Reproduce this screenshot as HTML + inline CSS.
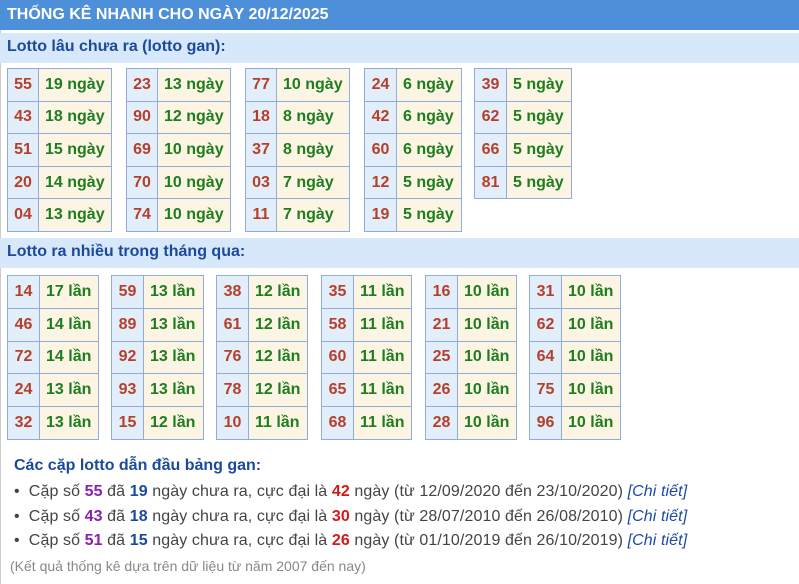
<!DOCTYPE html><html><head><meta charset="utf-8"><style>
body{margin:0;width:799px;height:584px;background:#fff;font-family:"Liberation Sans",Arial,sans-serif;position:relative;overflow:hidden}
.hd{position:absolute;left:0;top:0;width:799px;height:30px;background:#4d8fd8;color:#fff;font-weight:bold;font-size:16px;line-height:30px;padding-left:7px;box-sizing:border-box}
.sb{position:absolute;left:0;width:799px;height:30px;background:#d7e8fb;color:#1b4a9c;font-weight:bold;font-size:16px;line-height:28px;padding-left:7px;box-sizing:border-box}
table{position:absolute;border-collapse:collapse}
td{border:1px solid #90acd9;padding:0;font-weight:bold;font-size:16px}
td.n{background:#e3eefb;color:#b5402a;text-align:center}
td.d{background:#fdf5e4;color:#1e7d1e;padding-left:6px}
.lb{position:absolute;left:0;top:0;width:1px;height:584px;background:#ccc}
.b{position:absolute;left:14px;font-size:16px;color:#444;white-space:nowrap;letter-spacing:0.1px}
.b .p{color:#8a1fb0;font-weight:bold}.b .q{color:#1b4a9c;font-weight:bold}.b .r{color:#d31a1a;font-weight:bold}.b i{color:#1b4aa8}
</style></head><body>
<div class="lb"></div>
<div class="hd">THỐNG KÊ NHANH CHO NGÀY 20/12/2025</div>
<div class="sb" style="top:33px">Lotto lâu chưa ra (lotto gan):</div>
<table style="left:7px;top:68px;width:105px"><colgroup><col style="width:31px"><col></colgroup>
<tr style="height:32.6px"><td class="n">55</td><td class="d">19 ngày</td></tr><tr style="height:32.6px"><td class="n">43</td><td class="d">18 ngày</td></tr><tr style="height:32.6px"><td class="n">51</td><td class="d">15 ngày</td></tr><tr style="height:32.6px"><td class="n">20</td><td class="d">14 ngày</td></tr><tr style="height:32.6px"><td class="n">04</td><td class="d">13 ngày</td></tr></table>
<table style="left:126px;top:68px;width:105px"><colgroup><col style="width:31px"><col></colgroup>
<tr style="height:32.6px"><td class="n">23</td><td class="d">13 ngày</td></tr><tr style="height:32.6px"><td class="n">90</td><td class="d">12 ngày</td></tr><tr style="height:32.6px"><td class="n">69</td><td class="d">10 ngày</td></tr><tr style="height:32.6px"><td class="n">70</td><td class="d">10 ngày</td></tr><tr style="height:32.6px"><td class="n">74</td><td class="d">10 ngày</td></tr></table>
<table style="left:245px;top:68px;width:105px"><colgroup><col style="width:31px"><col></colgroup>
<tr style="height:32.6px"><td class="n">77</td><td class="d">10 ngày</td></tr><tr style="height:32.6px"><td class="n">18</td><td class="d">8 ngày</td></tr><tr style="height:32.6px"><td class="n">37</td><td class="d">8 ngày</td></tr><tr style="height:32.6px"><td class="n">03</td><td class="d">7 ngày</td></tr><tr style="height:32.6px"><td class="n">11</td><td class="d">7 ngày</td></tr></table>
<table style="left:364px;top:68px;width:98px"><colgroup><col style="width:32px"><col></colgroup>
<tr style="height:32.6px"><td class="n">24</td><td class="d">6 ngày</td></tr><tr style="height:32.6px"><td class="n">42</td><td class="d">6 ngày</td></tr><tr style="height:32.6px"><td class="n">60</td><td class="d">6 ngày</td></tr><tr style="height:32.6px"><td class="n">12</td><td class="d">5 ngày</td></tr><tr style="height:32.6px"><td class="n">19</td><td class="d">5 ngày</td></tr></table>
<table style="left:474px;top:68px;width:98px"><colgroup><col style="width:32px"><col></colgroup>
<tr style="height:32.6px"><td class="n">39</td><td class="d">5 ngày</td></tr><tr style="height:32.6px"><td class="n">62</td><td class="d">5 ngày</td></tr><tr style="height:32.6px"><td class="n">66</td><td class="d">5 ngày</td></tr><tr style="height:32.6px"><td class="n">81</td><td class="d">5 ngày</td></tr></table>
<div class="sb" style="top:238px">Lotto ra nhiều trong tháng qua:</div>
<table style="left:7px;top:275px;width:92px"><colgroup><col style="width:32px"><col></colgroup>
<tr style="height:32.8px"><td class="n">14</td><td class="d">17 lần</td></tr><tr style="height:32.8px"><td class="n">46</td><td class="d">14 lần</td></tr><tr style="height:32.8px"><td class="n">72</td><td class="d">14 lần</td></tr><tr style="height:32.8px"><td class="n">24</td><td class="d">13 lần</td></tr><tr style="height:32.8px"><td class="n">32</td><td class="d">13 lần</td></tr></table>
<table style="left:111px;top:275px;width:93px"><colgroup><col style="width:32px"><col></colgroup>
<tr style="height:32.8px"><td class="n">59</td><td class="d">13 lần</td></tr><tr style="height:32.8px"><td class="n">89</td><td class="d">13 lần</td></tr><tr style="height:32.8px"><td class="n">92</td><td class="d">13 lần</td></tr><tr style="height:32.8px"><td class="n">93</td><td class="d">13 lần</td></tr><tr style="height:32.8px"><td class="n">15</td><td class="d">12 lần</td></tr></table>
<table style="left:216px;top:275px;width:92px"><colgroup><col style="width:32px"><col></colgroup>
<tr style="height:32.8px"><td class="n">38</td><td class="d">12 lần</td></tr><tr style="height:32.8px"><td class="n">61</td><td class="d">12 lần</td></tr><tr style="height:32.8px"><td class="n">76</td><td class="d">12 lần</td></tr><tr style="height:32.8px"><td class="n">78</td><td class="d">12 lần</td></tr><tr style="height:32.8px"><td class="n">10</td><td class="d">11 lần</td></tr></table>
<table style="left:321px;top:275px;width:91px"><colgroup><col style="width:32px"><col></colgroup>
<tr style="height:32.8px"><td class="n">35</td><td class="d">11 lần</td></tr><tr style="height:32.8px"><td class="n">58</td><td class="d">11 lần</td></tr><tr style="height:32.8px"><td class="n">60</td><td class="d">11 lần</td></tr><tr style="height:32.8px"><td class="n">65</td><td class="d">11 lần</td></tr><tr style="height:32.8px"><td class="n">68</td><td class="d">11 lần</td></tr></table>
<table style="left:425px;top:275px;width:92px"><colgroup><col style="width:32px"><col></colgroup>
<tr style="height:32.8px"><td class="n">16</td><td class="d">10 lần</td></tr><tr style="height:32.8px"><td class="n">21</td><td class="d">10 lần</td></tr><tr style="height:32.8px"><td class="n">25</td><td class="d">10 lần</td></tr><tr style="height:32.8px"><td class="n">26</td><td class="d">10 lần</td></tr><tr style="height:32.8px"><td class="n">28</td><td class="d">10 lần</td></tr></table>
<table style="left:529px;top:275px;width:92px"><colgroup><col style="width:32px"><col></colgroup>
<tr style="height:32.8px"><td class="n">31</td><td class="d">10 lần</td></tr><tr style="height:32.8px"><td class="n">62</td><td class="d">10 lần</td></tr><tr style="height:32.8px"><td class="n">64</td><td class="d">10 lần</td></tr><tr style="height:32.8px"><td class="n">75</td><td class="d">10 lần</td></tr><tr style="height:32.8px"><td class="n">96</td><td class="d">10 lần</td></tr></table>
<div style="position:absolute;left:14px;top:457px;font-size:16px;font-weight:bold;color:#1b4a9c">Các cặp lotto dẫn đầu bảng gan:</div>
<div class="b" style="top:483px">•&nbsp;&nbsp;Cặp số <span class="p">55</span> đã <span class="q">19</span> ngày chưa ra, cực đại là <span class="r">42</span> ngày (từ 12/09/2020 đến 23/10/2020) <i>[Chi tiết]</i></div>
<div class="b" style="top:508px">•&nbsp;&nbsp;Cặp số <span class="p">43</span> đã <span class="q">18</span> ngày chưa ra, cực đại là <span class="r">30</span> ngày (từ 28/07/2010 đến 26/08/2010) <i>[Chi tiết]</i></div>
<div class="b" style="top:532px">•&nbsp;&nbsp;Cặp số <span class="p">51</span> đã <span class="q">15</span> ngày chưa ra, cực đại là <span class="r">26</span> ngày (từ 01/10/2019 đến 26/10/2019) <i>[Chi tiết]</i></div>
<div style="position:absolute;left:10px;top:558px;font-size:14px;color:#888">(Kết quả thống kê dựa trên dữ liệu từ năm 2007 đến nay)</div>
</body></html>
